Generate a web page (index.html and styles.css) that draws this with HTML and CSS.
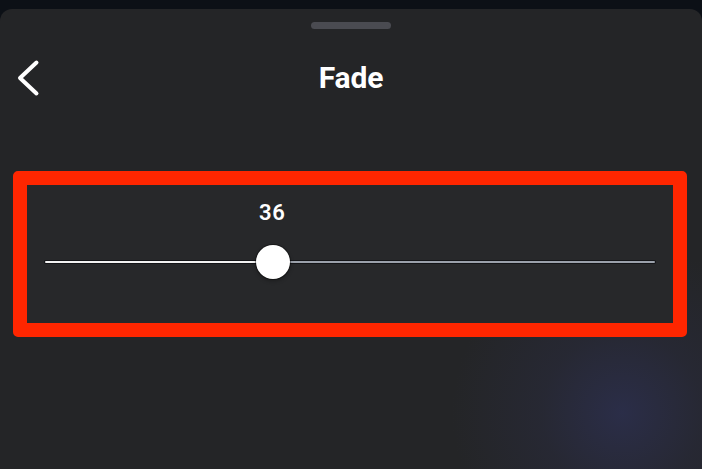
FILE: index.html
```html
<!DOCTYPE html>
<html lang="en">
<head>
<meta charset="utf-8">
<title>Fade</title>
<link rel="stylesheet" href="styles.css">
</head>
<body>
<div class="sheet">
  <div class="grabber"></div>
  <header class="header">
    <button class="back" aria-label="Back">
      <svg width="24" height="38" viewBox="0 0 24 38" fill="none" stroke="#ffffff" stroke-width="4" stroke-linecap="round" stroke-linejoin="round"><path d="M20.5 3.5 L4 19 L20.5 34.5"/></svg>
    </button>
    <h1 class="title">Fade</h1>
    <span class="spacer"></span>
  </header>
  <section class="panel">
    <div class="slider" style="--pos: 37.4%">
      <div class="value-row"><span class="value">36</span></div>
      <div class="track-row">
        <div class="track">
          <div class="fill"></div>
          <div class="rest"></div>
        </div>
        <div class="thumb"></div>
      </div>
    </div>
  </section>
</div>
</body>
</html>
```
FILE: styles.css
```css
* { box-sizing: border-box; }
html, body { margin: 0; padding: 0; }
body {
  background: #0c1016;
  font-family: Roboto, "Liberation Sans", sans-serif;
  color: #ffffff;
  height: 469px;
  overflow: hidden;
}
.sheet {
  margin-top: 9px;
  height: 460px;
  border-radius: 12px 12px 0 0;
  background:
    radial-gradient(circle at 622px 404px, rgba(44, 47, 78, 0.85) 0px, rgba(42, 44, 66, 0.45) 80px, rgba(37, 38, 40, 0) 170px),
    #242527;
  display: flex;
  flex-direction: column;
}
.grabber {
  width: 80px;
  height: 7px;
  border-radius: 4px;
  background: #4a4b51;
  margin: 13px auto 0;
}
.header {
  margin-top: 23px;
  height: 50px;
  display: grid;
  grid-template-columns: 1fr auto 1fr;
  align-items: center;
}
.back {
  justify-self: start;
  background: none;
  border: 0;
  padding: 0 0 0 16px;
  height: 38px;
  display: flex;
  align-items: center;
}
.title {
  margin: 0;
  font-size: 30px;
  font-weight: 700;
  line-height: 52px;
  letter-spacing: -0.2px;
}
.panel {
  margin: 69px 15px 0 13px;
  height: 166px;
  border: 14px solid #ff2600;
  border-radius: 5px;
  background: #27282a;
  padding: 16px 17px 0 17px;
}
.slider { position: relative; }
.value-row {
  height: 24px;
  display: flex;
}
.value {
  margin-left: calc(var(--pos) - 14px);
  font-size: 22px;
  font-weight: 600;
  line-height: 24px;
  letter-spacing: 0.8px;
}
.track-row {
  margin-top: 20px;
  height: 34px;
  position: relative;
  display: flex;
  align-items: center;
}
.track {
  width: 100%;
  height: 4px;
  display: flex;
  border-radius: 2px;
  background: #141518;
  padding: 1px;
}
.fill {
  width: var(--pos);
  background: #f2f2f2;
  border-radius: 1px 0 0 1px;
}
.rest {
  flex: 1;
  background: #9ba1ab;
  border-radius: 0 1px 1px 0;
}
.thumb {
  position: absolute;
  top: 0;
  left: calc(var(--pos) - 17px);
  width: 34px;
  height: 34px;
  border-radius: 50%;
  background: #ffffff;
  box-shadow: 0 0 0 1px rgba(0, 0, 0, 0.35), 0 2px 4px rgba(0, 0, 0, 0.3);
}
```
